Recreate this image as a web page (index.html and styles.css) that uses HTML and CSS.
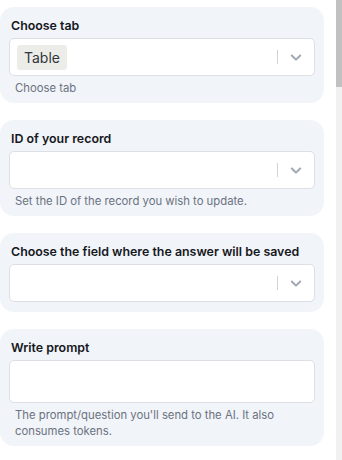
FILE: index.html
```html
<!DOCTYPE html>
<html lang="en">
<head>
    <meta charset="UTF-8">
    <meta name="viewport" content="width=device-width, initial-scale=1.0">
    <title>Prompt settings</title>
    <link rel="stylesheet" href="styles.css">
</head>
<body>
    <div class="layout">
        <div class="panel">
            <div class="field-card">
                <label class="field-label">Choose tab</label>
                <div class="select-box">
                    <div class="select-value">
                        <span class="chip">Table</span>
                    </div>
                    <span class="separator"></span>
                    <span class="indicator">
                        <svg viewBox="0 0 20 20" width="20" height="20"><path d="M4.516 7.548c0.436-0.446 1.043-0.481 1.576 0l3.908 3.747 3.908-3.747c0.533-0.481 1.141-0.446 1.574 0 0.436 0.445 0.408 1.197 0 1.615-0.406 0.418-4.695 4.502-4.695 4.502-0.217 0.223-0.502 0.335-0.787 0.335s-0.57-0.112-0.789-0.335c0 0-4.287-4.084-4.695-4.502s-0.436-1.17 0-1.615z"/></svg>
                    </span>
                </div>
                <p class="field-help">Choose tab</p>
            </div>

            <div class="field-card">
                <label class="field-label">ID of your record</label>
                <div class="select-box">
                    <div class="select-value"></div>
                    <span class="separator"></span>
                    <span class="indicator">
                        <svg viewBox="0 0 20 20" width="20" height="20"><path d="M4.516 7.548c0.436-0.446 1.043-0.481 1.576 0l3.908 3.747 3.908-3.747c0.533-0.481 1.141-0.446 1.574 0 0.436 0.445 0.408 1.197 0 1.615-0.406 0.418-4.695 4.502-4.695 4.502-0.217 0.223-0.502 0.335-0.787 0.335s-0.57-0.112-0.789-0.335c0 0-4.287-4.084-4.695-4.502s-0.436-1.17 0-1.615z"/></svg>
                    </span>
                </div>
                <p class="field-help">Set the ID of the record you wish to update.</p>
            </div>

            <div class="field-card">
                <label class="field-label">Choose the field where the answer will be saved</label>
                <div class="select-box">
                    <div class="select-value"></div>
                    <span class="separator"></span>
                    <span class="indicator">
                        <svg viewBox="0 0 20 20" width="20" height="20"><path d="M4.516 7.548c0.436-0.446 1.043-0.481 1.576 0l3.908 3.747 3.908-3.747c0.533-0.481 1.141-0.446 1.574 0 0.436 0.445 0.408 1.197 0 1.615-0.406 0.418-4.695 4.502-4.695 4.502-0.217 0.223-0.502 0.335-0.787 0.335s-0.57-0.112-0.789-0.335c0 0-4.287-4.084-4.695-4.502s-0.436-1.17 0-1.615z"/></svg>
                    </span>
                </div>
            </div>

            <div class="field-card">
                <label class="field-label">Write prompt</label>
                <textarea class="prompt-input"></textarea>
                <p class="field-help">The prompt/question you'll send to the AI. It also consumes tokens.</p>
            </div>
        </div>

        <div class="scrollbar">
            <div class="scroll-thumb"></div>
        </div>
    </div>
</body>
</html>
```

FILE: styles.css
```css
* {
    box-sizing: border-box;
}
body {
    margin: 0;
    font-family: Inter, "Noto Sans", sans-serif;
    background-color: #ffffff;
    color: #1a1a1a;
}
.layout {
    display: flex;
    height: 460px;
    overflow: hidden;
}
.panel {
    width: 324px;
    padding-top: 7px;
    display: flex;
    flex-direction: column;
    gap: 17px;
}
.field-card {
    background-color: #f1f4f9;
    border-radius: 14px;
    padding: 10px 9px 10px 9px;
    display: flex;
    flex-direction: column;
}
.field-label {
    font-size: 12.4px;
    font-weight: 600;
    line-height: 18px;
    padding-left: 2px;
    margin-bottom: 3px;
    color: #16181d;
}
.select-box {
    height: 38px;
    background-color: #ffffff;
    border: 1px solid #dcdfe4;
    border-radius: 5px;
    display: flex;
    align-items: center;
}
.select-value {
    flex: 1;
    padding: 0 7px;
    display: flex;
    align-items: center;
}
.chip {
    background-color: #ecede8;
    border-radius: 3px;
    padding: 3px 7px;
    font-size: 14px;
    line-height: 19px;
    color: #33363b;
}
.separator {
    width: 1px;
    height: 14px;
    background-color: #cfd2d6;
}
.indicator {
    width: 36px;
    display: flex;
    justify-content: center;
    align-items: center;
}
.indicator svg {
    fill: #a3a9b3;
    width: 18px;
    height: 18px;
}
.field-help {
    margin: 4px 0 -3px 0;
    padding-left: 6px;
    padding-right: 14px;
    font-size: 11.3px;
    line-height: 16px;
    color: #6b7280;
}
.prompt-input {
    display: block;
    height: 43px;
    border: 1px solid #dcdfe4;
    border-radius: 5px;
    resize: none;
    font-family: inherit;
    background-color: #ffffff;
}
.scrollbar {
    margin-left: 12px;
    width: 6px;
    background-color: #f1f1f1;
}
.scroll-thumb {
    height: 87px;
    background-color: #c1c1c1;
}
```
